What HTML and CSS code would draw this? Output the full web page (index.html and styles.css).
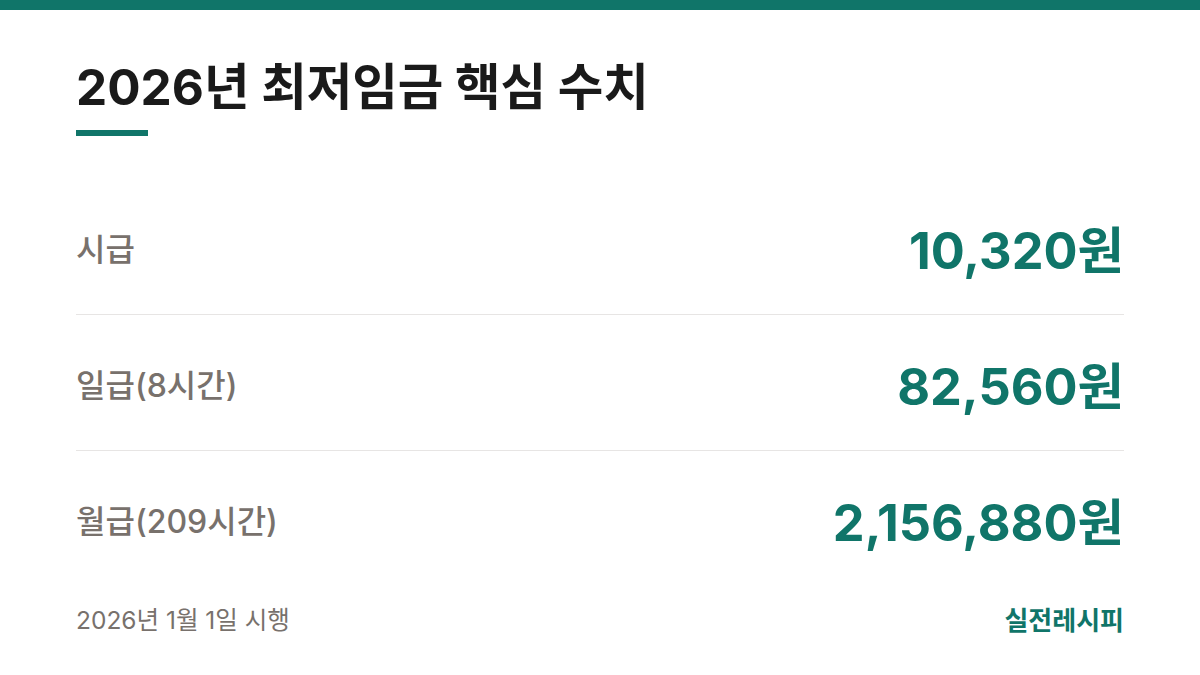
FILE: index.html
```html
<!DOCTYPE html>
<html lang="ko">
<head>
    <meta charset="UTF-8">
    <meta name="viewport" content="width=device-width, initial-scale=1.0">
    <title>2026년 최저임금 핵심 수치</title>
    <link rel="stylesheet" href="styles.css">
</head>
<body>

<div class="topbar"></div>

<div class="card">
    <div class="header">
        <h1>2026년 최저임금 핵심 수치</h1>
        <div class="underline"></div>
    </div>

    <div class="rows">
        <div class="row">
            <span class="label">시급</span>
            <span class="value">10,320원</span>
        </div>
        <div class="row">
            <span class="label">일급(8시간)</span>
            <span class="value">82,560원</span>
        </div>
        <div class="row">
            <span class="label">월급(209시간)</span>
            <span class="value">2,156,880원</span>
        </div>
    </div>

    <div class="footer">
        <span class="date">2026년 1월 1일 시행</span>
        <span class="brand">실전레시피</span>
    </div>
</div>

</body>
</html>
```

FILE: styles.css
```css
body {
    font-family: Inter, "Noto Sans CJK KR", sans-serif;
    background-color: #fff;
    color: #1c1917;
    margin: 0;
    padding: 0;
    width: 1200px;
    height: 675px;
    overflow: hidden;
}

.topbar {
    height: 10px;
    background-color: #107569; /* brand teal */
}

.card {
    padding: 0 76px;
}

.header {
    padding-top: 48px;
}

h1 {
    margin: 0;
    font-size: 49.5px;
    font-weight: 700;
    line-height: 58px;
    color: #1a1a1a;
}

.underline {
    width: 72px;
    height: 6px;
    margin-top: 14px;
    background-color: #107569;
}

.rows {
    margin-top: 43px;
}

.row {
    display: flex;
    justify-content: space-between;
    align-items: center;
    height: 135px;
    border-bottom: 1px solid #e7e5e4;
}

.row:last-child {
    border-bottom: none;
}

.label {
    font-size: 32px;
    font-weight: 500;
    color: #78716c;
}

.value {
    font-size: 50.5px;
    font-weight: 700;
    color: #107569;
}

.footer {
    display: flex;
    justify-content: space-between;
    align-items: center;
    margin-top: 14px;
}

.date {
    font-size: 24.5px;
    color: #78716c;
}

.brand {
    font-size: 26px;
    font-weight: 700;
    color: #107569;
}
```
